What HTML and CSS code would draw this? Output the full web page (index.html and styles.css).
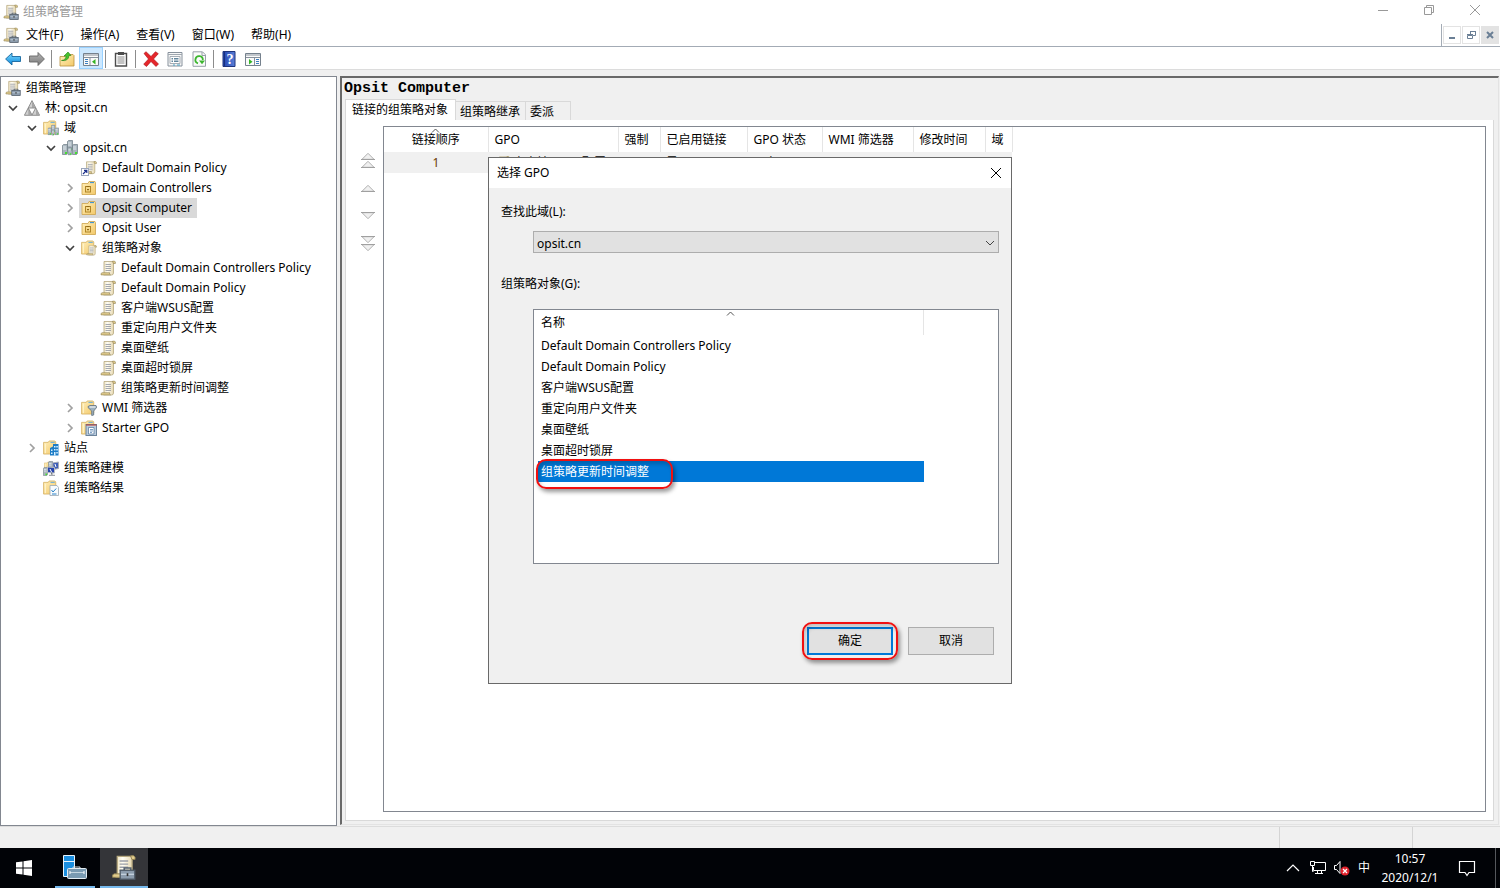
FILE: index.html
```
<!DOCTYPE html>
<html lang="zh-CN">
<head>
    <meta charset="UTF-8">
    <meta name="viewport" content="width=device-width, initial-scale=1.0">
    <title>组策略管理</title>
    <link rel="stylesheet" href="styles.css">
</head>
<body>

<!-- Icon sprite -->
<svg class="sprite" aria-hidden="true">
    <defs>
        <linearGradient id="gPaper" x1="0" x2="1"><stop offset="0" stop-color="#efe4c2"/><stop offset=".4" stop-color="#fffdf4"/><stop offset="1" stop-color="#e6d8b0"/></linearGradient>
        <linearGradient id="gFolder" x1="0" y1="0" x2="1" y2="1"><stop offset="0" stop-color="#ffefbb"/><stop offset="1" stop-color="#f3c969"/></linearGradient>
        <linearGradient id="gBlue" x1="0" y1="0" x2="0" y2="1"><stop offset="0" stop-color="#7fdcff"/><stop offset="1" stop-color="#0a86dc"/></linearGradient>
        <linearGradient id="gGray" x1="0" y1="0" x2="0" y2="1"><stop offset="0" stop-color="#b5b5b5"/><stop offset="1" stop-color="#7a7a7a"/></linearGradient>
        <linearGradient id="gHelp" x1="0" x2="1"><stop offset="0" stop-color="#2145b0"/><stop offset="1" stop-color="#5b7fd8"/></linearGradient>
    </defs>
    <symbol id="scroll" viewBox="0 0 16 16">
        <path d="M4 1.500h9.500v11.500q0 2-2 2h-8q1-1 .5-3z" fill="url(#gPaper)" stroke="#b5a77e" stroke-width=".8"/>
        <path d="M12.500 1.200q2.600-.6 2.900.8v1.500h-2zM1 14.900q-.4-2 1.200-2.200h7.500q-.6 1.600.8 2.200z" fill="#e2cd8e" stroke="#8f8052" stroke-width=".6"/>
        <path d="M5.500 4.500h5.500M5.500 6.500h5.500M5.500 8.500h5.500M5.500 10.500h5.500" stroke="#9b9fa8" stroke-width=".9"/>
    </symbol>
    <symbol id="toolbox" viewBox="0 0 10 8">
        <path d="M3 2V.6h4V2" fill="none" stroke="#56626f" stroke-width="1"/>
        <rect x=".5" y="2" width="9" height="5.500" fill="#8c9cad" stroke="#4e5a67" stroke-width=".8"/>
        <path d="M1 4.500h8" stroke="#c5d2de" stroke-width=".8"/><path d="M4.500 3.800h1v1.800h-1z" fill="#333"/>
    </symbol>
    <symbol id="gpmc" viewBox="0 0 16 16">
        <use href="#scroll" width="15" height="15"/>
        <use href="#toolbox" x="6" y="8.500" width="10" height="7.500"/>
    </symbol>
    <symbol id="folder" viewBox="0 0 16 16">
        <path d="M.6 2.500h5l1-1.500h6l1 1v12l-1 1h-12z" fill="url(#gFolder)" stroke="#d3ad5c" stroke-width=".8"/>
        <path d="M8 2.500h4.500" stroke="#58a8e0"/><path d="M2.500 4v10" stroke="#fff6d2"/>
    </symbol>
    <symbol id="ou" viewBox="0 0 16 16">
        <path d="M1 3.500h6l1-2h6l.5 1v12h-13.500z" fill="url(#gFolder)" stroke="#cda34c" stroke-width=".8"/>
        <path d="M9 2.600h4" stroke="#2f8fd8"/>
        <rect x="4.500" y="6.500" width="5" height="5.500" fill="#f6d98b" stroke="#b08528"/>
        <path d="M5.500 7v-1h3v1M6 9h2v1.200h-2z" fill="#8f6a18"/>
    </symbol>
    <symbol id="tower" viewBox="0 0 6 11">
        <path d="M.5 1.500l1-1h4v9l-1 1h-4z" fill="#a9b5be" stroke="#6d7b85" stroke-width=".7"/>
        <path d="M1 3h3.200M1 5h3.200" stroke="#e9f0f4" stroke-width=".9"/><path d="M3 8h2v2h-2z" fill="#45e030"/>
    </symbol>
    <symbol id="domain" viewBox="0 0 16 16">
        <use href="#tower" x="5" y="0" width="6" height="11"/>
        <use href="#tower" x="0" y="4" width="6" height="11"/>
        <use href="#tower" x="10" y="4" width="6" height="11"/>
        <use href="#tower" x="5.500" y="7" width="4.500" height="8.500"/>
    </symbol>
    <symbol id="domains" viewBox="0 0 16 16">
        <use href="#folder" width="15" height="15"/>
        <use href="#domain" x="4.500" y="4.500" width="11.500" height="11.500"/>
    </symbol>
    <symbol id="forest" viewBox="0 0 16 16">
        <path d="M8 .6L15.600 15.300H.4z" fill="#cfcfcf" stroke="#858585" stroke-width=".9"/>
        <path d="M8 1v6.800h3.600zM4.300 8.500v6.500h3.200zM12 8.500v6.500h3.400z" fill="#a6a6a6"/>
        <path d="M4.300 8h7.400L8 15z" fill="#fff" stroke="#858585" stroke-width=".9"/>
    </symbol>
    <symbol id="link" viewBox="0 0 16 16">
        <use href="#scroll" x="2" width="14" height="15"/>
        <rect x=".5" y="8.500" width="7" height="7" fill="#fff" stroke="#9aa6bc"/>
        <path d="M2 14l3.500-3.500M3 10.300h2.800v2.800" fill="none" stroke="#1c2f8c" stroke-width="1.200"/>
    </symbol>
    <symbol id="gpos" viewBox="0 0 16 16">
        <use href="#folder" width="15" height="15"/><use href="#scroll" x="5" y="4.500" width="11" height="11.500"/>
    </symbol>
    <symbol id="wmi" viewBox="0 0 16 16">
        <use href="#folder" width="15" height="15"/>
        <path d="M7 6.500l2-1h6l1 1.500-3.300 4v4l-2 .5v-4.500l-3.700-3.500z" fill="#9cb0bf" stroke="#61717d" stroke-width=".8"/><path d="M8.500 7h6" stroke="#fff"/>
    </symbol>
    <symbol id="starter" viewBox="0 0 16 16">
        <use href="#folder" width="15" height="15"/>
        <rect x="5" y="4.500" width="10.500" height="11" fill="#b9cbdc" stroke="#6c839b"/>
        <path d="M5 5h10.500" stroke="#c0392b"/><path d="M7.500 7.500h5.500v6.500h-5.500z" fill="#fff" stroke="#50749b" stroke-width=".7"/><path d="M9 9.500h3M9 11h3M9 12.500h2" stroke="#4377ad" stroke-width=".7"/>
    </symbol>
    <symbol id="sites" viewBox="0 0 16 16">
        <use href="#folder" width="15" height="15"/>
        <path d="M7 8l3-1.500V4h5.500v11.500H7z" fill="#1c7cc6"/>
        <path d="M11 6h1.500v1.500H11zM13.300 6h1.500v1.500h-1.500zM11 9h1.500v1.500H11zM13.300 9h1.500v1.500h-1.500zM8 9.500h1.500V11H8zM8 12.500h1.500V14H8zM11 12h1.500v3.500H11zM13.300 12h1.500v1.500h-1.500z" fill="#d8f0ff"/>
    </symbol>
    <symbol id="modeling" viewBox="0 0 16 16">
        <use href="#folder" x="1" width="9" height="12"/>
        <use href="#tower" x="0" y="7" width="5" height="9"/><use href="#tower" x="5" y="1" width="5" height="9"/>
        <path d="M9.500 3l6-1v6.500l-5 1z" fill="#3f5fb8" stroke="#a8adb6"/>
        <path d="M4.500 7l7 .5v5.500l-7-.5z" fill="#2543ae" stroke="#b6bac0"/><path d="M7 9l1.500 3M12 4l1 3" stroke="#fff"/><path d="M8 13h1v2M6 15.300h6" stroke="#8b929a"/>
    </symbol>
    <symbol id="results" viewBox="0 0 16 16">
        <use href="#folder" width="15" height="15"/>
        <path d="M7 5.500h7l1.500 2v8h-8.500z" fill="#f8fbfd" stroke="#9aa8b4" stroke-width=".8"/>
        <path d="M8.500 10l1.500 2 3.200-3.500M9 14h4.500" fill="none" stroke="#2b82c9"/>
    </symbol>
    <symbol id="open" viewBox="0 0 10 10"><path d="M1 3l4 4 4-4" fill="none" stroke="#404040" stroke-width="1.700"/></symbol>
    <symbol id="closed" viewBox="0 0 10 10"><path d="M3 1l4 4-4 4" fill="none" stroke="#a0a0a0" stroke-width="1.700"/></symbol>
    <symbol id="up" viewBox="0 0 9 5"><path d="M1 4.500l3.500-3.500 3.500 3.500" fill="none" stroke="#555"/></symbol>
    <symbol id="close" viewBox="0 0 12 12"><path d="M1 1l10 10M11 1l-10 10" fill="none" stroke="currentColor"/></symbol>
    <symbol id="tri" viewBox="0 0 14 8"><path d="M1 7.300l6-6 6 6z" fill="#f0f0f0" stroke="#b0b0b0"/><path d="M0 7.500h14" stroke="#a0a0a0"/></symbol>
</svg>

<header class="titlebar">
    <svg class="icon"><use href="#gpmc"/></svg>
    <span class="title">组策略管理</span>
    <div class="window-buttons">
        <button aria-label="最小化"><svg width="12" height="12"><path d="M1 6.500h10" stroke="#999"/></svg></button>
        <button aria-label="还原"><svg width="12" height="12" fill="none" stroke="#999"><path d="M1.500 3.500h7v7h-7zM3.500 3.500v-2h7v7h-2"/></svg></button>
        <button aria-label="关闭"><svg width="12" height="12"><use href="#close"/></svg></button>
    </div>
</header>

<nav class="menubar">
    <svg class="icon"><use href="#gpmc"/></svg>
    <button>文件(F)</button>
    <button>操作(A)</button>
    <button>查看(V)</button>
    <button>窗口(W)</button>
    <button>帮助(H)</button>
    <div class="mdi-buttons">
        <button aria-label="最小化子窗口"><svg width="12" height="12"><path d="M3 9h6" stroke="#6a7f95" stroke-width="2"/></svg></button>
        <button aria-label="还原子窗口"><svg width="12" height="12" fill="none" stroke="#6a7f95"><path d="M2.500 6.500h5v3h-5zM2 5.500h6M5.500 5V2.500h5v4H8M5 2.500h6"/></svg></button>
        <button aria-label="关闭子窗口" class="mdi-close"><svg width="12" height="12"><path d="M3 3l6 6M9 3l-6 6" stroke="#6a7f95" stroke-width="2"/></svg></button>
    </div>
</nav>

<div class="toolbar">
    <button aria-label="后退"><svg class="icon" viewBox="0 0 16 16"><path d="M.6 8L7 2v3.500h8.500v5H7V14z" fill="url(#gBlue)" stroke="#17669e" stroke-width=".9"/></svg></button>
    <button aria-label="前进"><svg class="icon" viewBox="0 0 16 16"><path d="M15.400 8L9 1.500v3.500H.5v6H9v3.500z" fill="url(#gGray)" stroke="#666" stroke-width=".9"/></svg></button>
    <span class="sep"></span>
    <button aria-label="上移一级"><svg class="icon" viewBox="0 0 16 16"><path d="M1 5.500h5l1.500-2H14l1 1v10.500H1z" fill="url(#gFolder)" stroke="#b8913e" stroke-width=".8"/><path d="M2.500 9.500Q7 9 7 5H5l4-4 3 3.500h-2Q9.500 10.500 2.500 9.500z" fill="#46c32e" stroke="#258016" stroke-width=".6"/></svg></button>
    <button aria-label="显示/隐藏控制台树" class="pressed"><svg class="icon" viewBox="0 0 16 16"><path d="M.5 2.500h15v12H.5z" fill="#fafafa" stroke="#75818d"/><path d="M1 4h14M1 6.500h14M7 7v7" stroke="#87919c"/><path d="M2 8.500h3M2 10.500h3M2 12.500h3" stroke="#3b7fc1"/><path d="M12.500 8v5.500L9 10.700z" fill="#35b425"/></svg></button>
    <span class="sep"></span>
    <button aria-label="粘贴"><svg class="icon" viewBox="0 0 16 16"><path d="M2.500 2.500h11v12.500h-11z" fill="#fff" stroke="#4c4c4c" stroke-width="1.400"/><path d="M5 1h6v3H5z" fill="#4c4c4c"/><path d="M4.500 6h7M4.500 8h7M4.500 10h7M4.500 12h7" stroke="#888"/></svg></button>
    <span class="sep"></span>
    <button aria-label="删除"><svg class="icon" viewBox="0 0 16 16"><path d="M1 2.500L3 .7l5 4.800L12.500.7l2.800 2L10.500 8l5 5-2.500 2.500-5-5-4.500 5L.7 13.200 5.500 8z" fill="#e6262b" stroke="#a50f13" stroke-width=".6"/></svg></button>
    <button aria-label="属性"><svg class="icon" viewBox="0 0 16 16"><path d="M1 1.500h14v13.500H1z" fill="#f7f7f7" stroke="#87919c"/><path d="M1 3.500h14" stroke="#a0a8b0"/><path d="M3 5.500h10v7H3z" fill="#fff" stroke="#a5adb5"/><path d="M4.500 7.500h1.500M7 7.500h4.500M4.500 9h1.500M7 9h4.500M4.500 10.500h1.500M7 10.500h4.500" stroke="#61859c"/><path d="M6 14h2M10 14h3" stroke="#46a1c4"/></svg></button>
    <button aria-label="刷新"><svg class="icon" viewBox="0 0 16 16"><path d="M2 .8h9.500l3 3v11.500H2z" fill="#fafafa" stroke="#97a0a8"/><path d="M11 1v3.500h3.500" fill="none" stroke="#97a0a8"/><path d="M7 12.300A3.700 3.700 0 1 1 11.800 9" fill="none" stroke="#3cb62e" stroke-width="1.800"/><path d="M8 9.500h6l-3 3.800z" fill="#3cb62e"/></svg></button>
    <span class="sep"></span>
    <button aria-label="帮助"><svg class="icon" viewBox="0 0 16 16"><path d="M2 .5h12v15H2z" fill="url(#gHelp)" stroke="#1e347d"/><path d="M3.500 1v14" stroke="#172f7e"/><text x="9" y="13" class="help-mark">?</text></svg></button>
    <button aria-label="显示/隐藏操作窗格"><svg class="icon" viewBox="0 0 16 16"><path d="M.5 2.500h15v12H.5z" fill="#fafafa" stroke="#75818d"/><path d="M1 4h14M1 6.500h14M9.500 7v7" stroke="#87919c"/><path d="M11 8.500h3M11 10.500h3M11 12.500h3" stroke="#3b7fc1"/><path d="M4 8v5.500l3.500-2.800z" fill="#35b425"/></svg></button>
</div>

<main class="workspace">
    <aside class="tree">
        <div class="item root"><svg class="icon"><use href="#gpmc"/></svg>组策略管理</div>
        <ul>
            <li>
                <div class="row"><svg class="chev"><use href="#open"/></svg><div class="item"><svg class="icon"><use href="#forest"/></svg>林: opsit.cn</div></div>
                <ul>
                    <li>
                        <div class="row"><svg class="chev"><use href="#open"/></svg><div class="item"><svg class="icon"><use href="#domains"/></svg>域</div></div>
                        <ul>
                            <li>
                                <div class="row"><svg class="chev"><use href="#open"/></svg><div class="item"><svg class="icon"><use href="#domain"/></svg>opsit.cn</div></div>
                                <ul>
                                    <li class="row"><svg class="chev"></svg><div class="item"><svg class="icon"><use href="#link"/></svg>Default Domain Policy</div></li>
                                    <li class="row"><svg class="chev"><use href="#closed"/></svg><div class="item"><svg class="icon"><use href="#ou"/></svg>Domain Controllers</div></li>
                                    <li class="row"><svg class="chev"><use href="#closed"/></svg><div class="item current"><svg class="icon"><use href="#ou"/></svg>Opsit Computer</div></li>
                                    <li class="row"><svg class="chev"><use href="#closed"/></svg><div class="item"><svg class="icon"><use href="#ou"/></svg>Opsit User</div></li>
                                    <li>
                                        <div class="row"><svg class="chev"><use href="#open"/></svg><div class="item"><svg class="icon"><use href="#gpos"/></svg>组策略对象</div></div>
                                        <ul>
                                            <li class="row"><svg class="chev"></svg><div class="item"><svg class="icon"><use href="#scroll"/></svg>Default Domain Controllers Policy</div></li>
                                            <li class="row"><svg class="chev"></svg><div class="item"><svg class="icon"><use href="#scroll"/></svg>Default Domain Policy</div></li>
                                            <li class="row"><svg class="chev"></svg><div class="item"><svg class="icon"><use href="#scroll"/></svg>客户端WSUS配置</div></li>
                                            <li class="row"><svg class="chev"></svg><div class="item"><svg class="icon"><use href="#scroll"/></svg>重定向用户文件夹</div></li>
                                            <li class="row"><svg class="chev"></svg><div class="item"><svg class="icon"><use href="#scroll"/></svg>桌面壁纸</div></li>
                                            <li class="row"><svg class="chev"></svg><div class="item"><svg class="icon"><use href="#scroll"/></svg>桌面超时锁屏</div></li>
                                            <li class="row"><svg class="chev"></svg><div class="item"><svg class="icon"><use href="#scroll"/></svg>组策略更新时间调整</div></li>
                                        </ul>
                                    </li>
                                    <li class="row"><svg class="chev"><use href="#closed"/></svg><div class="item"><svg class="icon"><use href="#wmi"/></svg>WMI 筛选器</div></li>
                                    <li class="row"><svg class="chev"><use href="#closed"/></svg><div class="item"><svg class="icon"><use href="#starter"/></svg>Starter GPO</div></li>
                                </ul>
                            </li>
                        </ul>
                    </li>
                    <li class="row"><svg class="chev"><use href="#closed"/></svg><div class="item"><svg class="icon"><use href="#sites"/></svg>站点</div></li>
                    <li class="row"><svg class="chev"></svg><div class="item"><svg class="icon"><use href="#modeling"/></svg>组策略建模</div></li>
                    <li class="row"><svg class="chev"></svg><div class="item"><svg class="icon"><use href="#results"/></svg>组策略结果</div></li>
                </ul>
            </li>
        </ul>
    </aside>

    <section class="detail">
        <h1>Opsit Computer</h1>
        <div class="tabs">
            <button class="tab active">链接的组策略对象</button>
            <button class="tab">组策略继承</button>
            <button class="tab last">委派</button>
        </div>
        <div class="panel">
            <div class="order-buttons">
                <button aria-label="移到顶部"><svg><use href="#tri"/></svg><svg><use href="#tri"/></svg></button>
                <button aria-label="上移"><svg><use href="#tri"/></svg></button>
                <button aria-label="下移" class="down"><svg><use href="#tri"/></svg></button>
                <button aria-label="移到底部" class="down"><svg><use href="#tri"/></svg><svg><use href="#tri"/></svg></button>
            </div>
            <div class="links">
                <table>
                    <colgroup>
                        <col class="w-order"><col class="w-gpo"><col class="w-enforced"><col class="w-enabled">
                        <col class="w-status"><col class="w-wmi"><col class="w-modified"><col class="w-domain">
                    </colgroup>
                    <thead>
                        <tr>
                            <th class="center">链接顺序<svg class="sort"><use href="#up"/></svg></th>
                            <th>GPO</th><th>强制</th><th>已启用链接</th><th>GPO 状态</th><th>WMI 筛选器</th><th>修改时间</th><th>域</th>
                        </tr>
                    </thead>
                    <tbody>
                        <tr>
                            <td class="center order">1</td>
                            <td><span class="gpo-cell"><svg class="icon"><use href="#link"/></svg>客户端WSUS配置</span></td>
                            <td>否</td><td>是</td><td>已启用</td><td>无</td><td></td><td></td>
                        </tr>
                    </tbody>
                </table>
            </div>
        </div>
    </section>
</main>

<div class="statusbar"><span></span><span></span><span></span></div>

<!-- Select GPO dialog -->
<div class="dialog" role="dialog" aria-labelledby="dialogTitle">
    <div class="dialog-title">
        <span id="dialogTitle">选择 GPO</span>
        <button aria-label="关闭"><svg width="12" height="12"><use href="#close"/></svg></button>
    </div>
    <div class="dialog-body">
        <label for="domainSelect">查找此域(L):</label>
        <div class="combo">
            <select id="domainSelect"><option>opsit.cn</option></select>
            <svg class="combo-arrow" viewBox="0 0 10 6"><path d="M1 1l4 4 4-4" fill="none" stroke="#444"/></svg>
        </div>
        <div class="list-label" id="gpoLabel">组策略对象(G):</div>
        <div class="listbox">
            <table aria-labelledby="gpoLabel">
                <thead><tr><th>名称<svg class="sort"><use href="#up"/></svg></th></tr></thead>
                <tbody>
                    <tr><td>Default Domain Controllers Policy</td></tr>
                    <tr><td>Default Domain Policy</td></tr>
                    <tr><td>客户端WSUS配置</td></tr>
                    <tr><td>重定向用户文件夹</td></tr>
                    <tr><td>桌面壁纸</td></tr>
                    <tr><td>桌面超时锁屏</td></tr>
                    <tr class="selected"><td>组策略更新时间调整<span class="ring ring-row"></span></td></tr>
                </tbody>
            </table>
        </div>
        <div class="dialog-actions">
            <div class="ok-wrap"><button class="default">确定</button><span class="ring ring-ok"></span></div>
            <button>取消</button>
        </div>
    </div>
</div>

<footer class="taskbar">
    <button class="start" aria-label="开始"><svg width="16" height="16"><path d="M0 2.300l6.500-.9v6.100H0zM7.500 1.200L16 0v7.500H7.500zM0 8.500h6.500v6.100L0 13.700zM7.500 8.500H16V16l-8.500-1.200z" fill="#fff"/></svg></button>
    <button class="task" aria-label="服务器管理器">
        <svg width="26" height="26"><path d="M1.500 1.500h11v21h-11z" fill="#1b8fe0" stroke="#e8f4fc"/><path d="M1 7.500h12" stroke="#e8f4fc"/><path d="M11 15v-2h7v2" fill="none" stroke="#cfe0ea"/><rect x="5.500" y="14.500" width="19" height="10" rx="1" fill="#7a9bb2" stroke="#e3edf3"/><path d="M8 18.500h14" stroke="#c4d6e0"/><path d="M8 17v3M22 17v3" stroke="#fff"/></svg>
    </button>
    <button class="task focused" aria-label="组策略管理"><svg width="26" height="26"><use href="#scroll" width="25" height="25"/><use href="#toolbox" x="8" y="13" width="17" height="13"/></svg></button>
    <div class="tray">
        <svg class="tray-up" viewBox="0 0 14 8"><path d="M1 7l6-6 6 6" fill="none" stroke="#fff" stroke-width="1.200"/></svg>
        <svg width="17" height="16" fill="none" stroke="#fff"><path d="M5 2.500h11.500v8H4.500V7M8.500 10.500v3M12.500 10.500v3M6 13.500h8M1.500 1.500h4v4h-4zM3.500 5.500v6h1"/></svg>
        <svg width="18" height="16" fill="none" stroke="#fff"><path d="M1.500 5.500h2l3.500-4v12l-3.500-4h-2z"/><circle cx="12" cy="11" r="4.500" fill="#e0222c" stroke="none"/><path d="M10 9l4 4M14 9l-4 4" stroke-width="1.300"/></svg>
        <span class="ime">中</span>
        <div class="clock"><div>10:57</div><div>2020/12/1</div></div>
        <button class="notify" aria-label="通知"><svg width="18" height="17"><path d="M1.500 1.500h15v11h-5.500l-2 3-2-3H1.500z" fill="none" stroke="#fff" stroke-width="1.200"/></svg></button>
    </div>
    <div class="show-desktop"></div>
</footer>

</body>
</html>
```
FILE: styles.css
```
* {
    box-sizing: border-box;
}

body {
    margin: 0;
    height: 100vh;
    display: flex;
    flex-direction: column;
    overflow: hidden;
    background: #f0f0f0;
    color: #000;
    font: 12px/20px "Noto Sans", "Noto Sans CJK SC", sans-serif;
}

button, select {
    margin: 0;
    padding: 0;
    border: 0;
    background: none;
    color: inherit;
    font: inherit;
}

ul {
    list-style: none;
    margin: 0;
    padding: 0;
}

svg {
    flex: none;
}

.sprite {
    position: absolute;
    width: 0;
    height: 0;
}

.icon {
    width: 16px;
    height: 16px;
}

/* Title bar */
.titlebar {
    display: flex;
    align-items: center;
    height: 24px;
    padding-left: 3px;
    background: #fff;
    color: #999;
}

.title {
    margin-left: 4px;
}

.window-buttons {
    display: flex;
    height: 20px;
    margin-left: auto;
    margin-bottom: 4px;
    padding-right: 2px;
}

.window-buttons button {
    display: flex;
    align-items: center;
    justify-content: center;
    width: 46px;
}

/* Menu bar */
.menubar {
    display: flex;
    align-items: center;
    gap: 17px;
    height: 23px;
    padding-left: 3px;
    background: #fff;
    border-bottom: 1px solid #a3abb5;
}

.menubar .icon {
    margin-right: -10px;
}

.mdi-buttons {
    display: flex;
    align-items: center;
    gap: 1px;
    height: 23px;
    margin-left: auto;
    padding: 0 1px;
    border-left: 1px solid #a3abb5;
}

.mdi-buttons button {
    display: flex;
    align-items: center;
    justify-content: center;
    width: 18px;
    height: 18px;
    border: 1px solid #e3e3e3;
}

.mdi-buttons .mdi-close {
    background: #e3e3e3;
}

/* Toolbar */
.toolbar {
    display: flex;
    align-items: center;
    height: 23px;
    padding-left: 1px;
    background: #fff;
    border-bottom: 1px solid #dcdcdc;
}

.toolbar button {
    display: flex;
    align-items: center;
    justify-content: center;
    width: 24px;
    height: 22px;
    padding-top: 2px;
}

.toolbar .pressed {
    background: #cce8ff;
    border: 1px solid #99d1ff;
}

.sep {
    width: 1px;
    height: 18px;
    margin: 2px 3px 0 2px;
    background: #8c8c8c;
}

.help-mark {
    fill: #fff;
    font: bold 14px "Liberation Serif", serif;
    text-anchor: middle;
}

/* Workspace */
.workspace {
    display: flex;
    flex: 1;
    gap: 3px;
    min-height: 0;
    padding-top: 6px;
}

.tree {
    width: 337px;
    padding: 1px 0 0 4px;
    background: #fff;
    border: 1px solid #828790;
    overflow: hidden;
    white-space: nowrap;
}

.tree ul ul {
    padding-left: 19px;
}

.row {
    display: flex;
    align-items: center;
}

.chev {
    width: 10px;
    height: 10px;
    margin: 0 4px 0 3px;
}

.item {
    display: flex;
    align-items: center;
    gap: 5px;
    height: 20px;
    padding: 0 5px 0 2px;
}

.item.root {
    padding-left: 0;
}

.item.current {
    background: #d9d9d9;
}

/* Detail pane */
.detail {
    display: flex;
    flex: 1;
    flex-direction: column;
    min-width: 0;
    margin: 0 1px 1px 0;
    padding: 0 4px 3px 2px;
    border: 2px solid #696969;
    border-width: 2px 1px 1px 2px;
    border-right-color: #e3e3e3;
    border-bottom-color: #e3e3e3;
}

.detail h1 {
    margin: 0;
    font: bold 15px/22px "Liberation Mono", monospace;
}

.tabs {
    display: flex;
    align-items: flex-end;
    height: 20px;
    padding-left: 1px;
}

.tab {
    height: 19px;
    padding: 0 5px 0 4px;
    border: 1px solid #d9d9d9;
    border-width: 1px 1px 0 0;
}

.tab.active {
    height: 21px;
    padding: 0 7px 2px 6px;
    background: #fff;
    border-left-width: 1px;
}

.tab.last {
    padding-right: 16px;
}

.panel {
    display: flex;
    flex: 1;
    min-height: 0;
    margin-left: 1px;
    padding: 6px 7px 8px 0;
    background: #fff;
    border: 1px solid #d9d9d9;
    border-top: 0;
}

.order-buttons {
    display: flex;
    flex-direction: column;
    width: 37px;
    padding: 20px 0 0 7px;
}

.order-buttons button {
    display: flex;
    flex-direction: column;
    align-items: center;
    justify-content: center;
    height: 28px;
}

.order-buttons svg {
    width: 14px;
    height: 8px;
}

.down svg {
    transform: rotate(180deg);
}

.links {
    flex: 1;
    border: 1px solid #828790;
}

.links table {
    width: 628px;
    table-layout: fixed;
    border-collapse: collapse;
    white-space: nowrap;
}

.w-order { width: 104px; }
.w-gpo { width: 130px; }
.w-enforced { width: 42px; }
.w-enabled { width: 87px; }
.w-status { width: 75px; }
.w-wmi { width: 91px; }
.w-modified { width: 72px; }
.w-domain { width: 27px; }

.links th, .links td {
    position: relative;
    padding: 0 0 0 6px;
    font-weight: normal;
    text-align: left;
}

.links th {
    height: 25px;
    border-right: 1px solid #e5e5e5;
}

.links td {
    height: 21px;
    padding-top: 1px;
    background: #f0f0f0;
}

.links .center {
    padding-left: 0;
    text-align: center;
}

.links .order {
    color: #6b3a00;
}

.gpo-cell {
    display: flex;
    align-items: center;
    gap: 3px;
}

.sort {
    position: absolute;
    top: 1px;
    left: 50%;
    width: 9px;
    height: 5px;
    margin-left: -5px;
}

/* Status bar */
.statusbar {
    display: flex;
    height: 22px;
    border-top: 1px solid #dcdcdc;
}

.statusbar span {
    flex: 1;
    border-right: 1px solid #d4d4d4;
}

.statusbar span + span {
    flex: none;
    width: 133px;
}

.statusbar span:last-child {
    width: 87px;
    border: 0;
}

/* Select GPO dialog */
.dialog {
    position: absolute;
    top: 157px;
    left: 488px;
    width: 524px;
    background: #f0f0f0;
    border: 1px solid #696969;
}

.dialog-title {
    display: flex;
    align-items: center;
    justify-content: space-between;
    height: 30px;
    padding: 0 9px 0 8px;
    background: #fff;
}

.dialog-title button {
    display: flex;
}

.dialog-body {
    padding: 14px 12px 28px;
}

.dialog-body label {
    display: block;
}

.combo {
    position: relative;
    margin: 9px 0 21px 32px;
}

.combo select {
    display: block;
    width: 100%;
    height: 22px;
    padding: 2px 0 0 3px;
    appearance: none;
    background: #e1e1e1;
    border: 1px solid #adadad;
    border-radius: 0;
}

.combo-arrow {
    position: absolute;
    top: 9px;
    right: 4px;
    width: 10px;
    height: 6px;
    pointer-events: none;
}

.listbox {
    height: 255px;
    margin: 15px 0 0 32px;
    padding-left: 4px;
    background: #fff;
    border: 1px solid #828790;
}

.listbox table {
    width: 386px;
    border-collapse: collapse;
}

.listbox th, .listbox td {
    position: relative;
    padding: 0 0 0 3px;
    font-weight: normal;
    text-align: left;
}

.listbox th {
    height: 25px;
    border-right: 1px solid #e5e5e5;
}

.listbox td {
    height: 21px;
}

.listbox .selected td {
    background: #0078d7;
    color: #fff;
}

.dialog-actions {
    display: flex;
    justify-content: flex-end;
    gap: 15px;
    margin: 63px 5px 0 0;
}

.dialog-actions button {
    width: 86px;
    height: 28px;
    background: #e1e1e1;
    border: 1px solid #adadad;
}

.dialog-actions .default {
    border: 2px solid #0078d7;
}

.ok-wrap {
    position: relative;
}

/* Red highlight rings */
.ring {
    position: absolute;
    border: 2px solid #f01010;
    border-radius: 10px;
    box-shadow: 2px 3px 4px rgba(0, 0, 0, 0.4), inset 2px 3px 4px rgba(0, 0, 0, 0.2);
    pointer-events: none;
}

.ring-row {
    top: -2px;
    left: -2px;
    width: 137px;
    height: 30px;
}

.ring-ok {
    top: -5px;
    left: -5px;
    width: 96px;
    height: 38px;
}

/* Taskbar */
.taskbar {
    display: flex;
    height: 40px;
    background: #010307;
    color: #fff;
}

.start {
    display: flex;
    align-items: center;
    justify-content: center;
    width: 48px;
}

.task {
    display: flex;
    align-items: center;
    justify-content: center;
    width: 40px;
    margin: 0 5px 0 7px;
    border-bottom: 2px solid #76b9ed;
}

.task.focused {
    width: 48px;
    margin: 0;
    background: #343539;
}

.tray {
    display: flex;
    align-items: center;
    margin-left: auto;
    gap: 7px;
}

.tray-up {
    width: 14px;
    height: 8px;
    margin-right: 2px;
}

.clock {
    width: 66px;
    line-height: 19px;
    text-align: center;
}

.notify {
    display: flex;
    margin: 0 19px 0 8px;
}

.show-desktop {
    width: 5px;
    border-left: 1px solid #55585c;
}
```
